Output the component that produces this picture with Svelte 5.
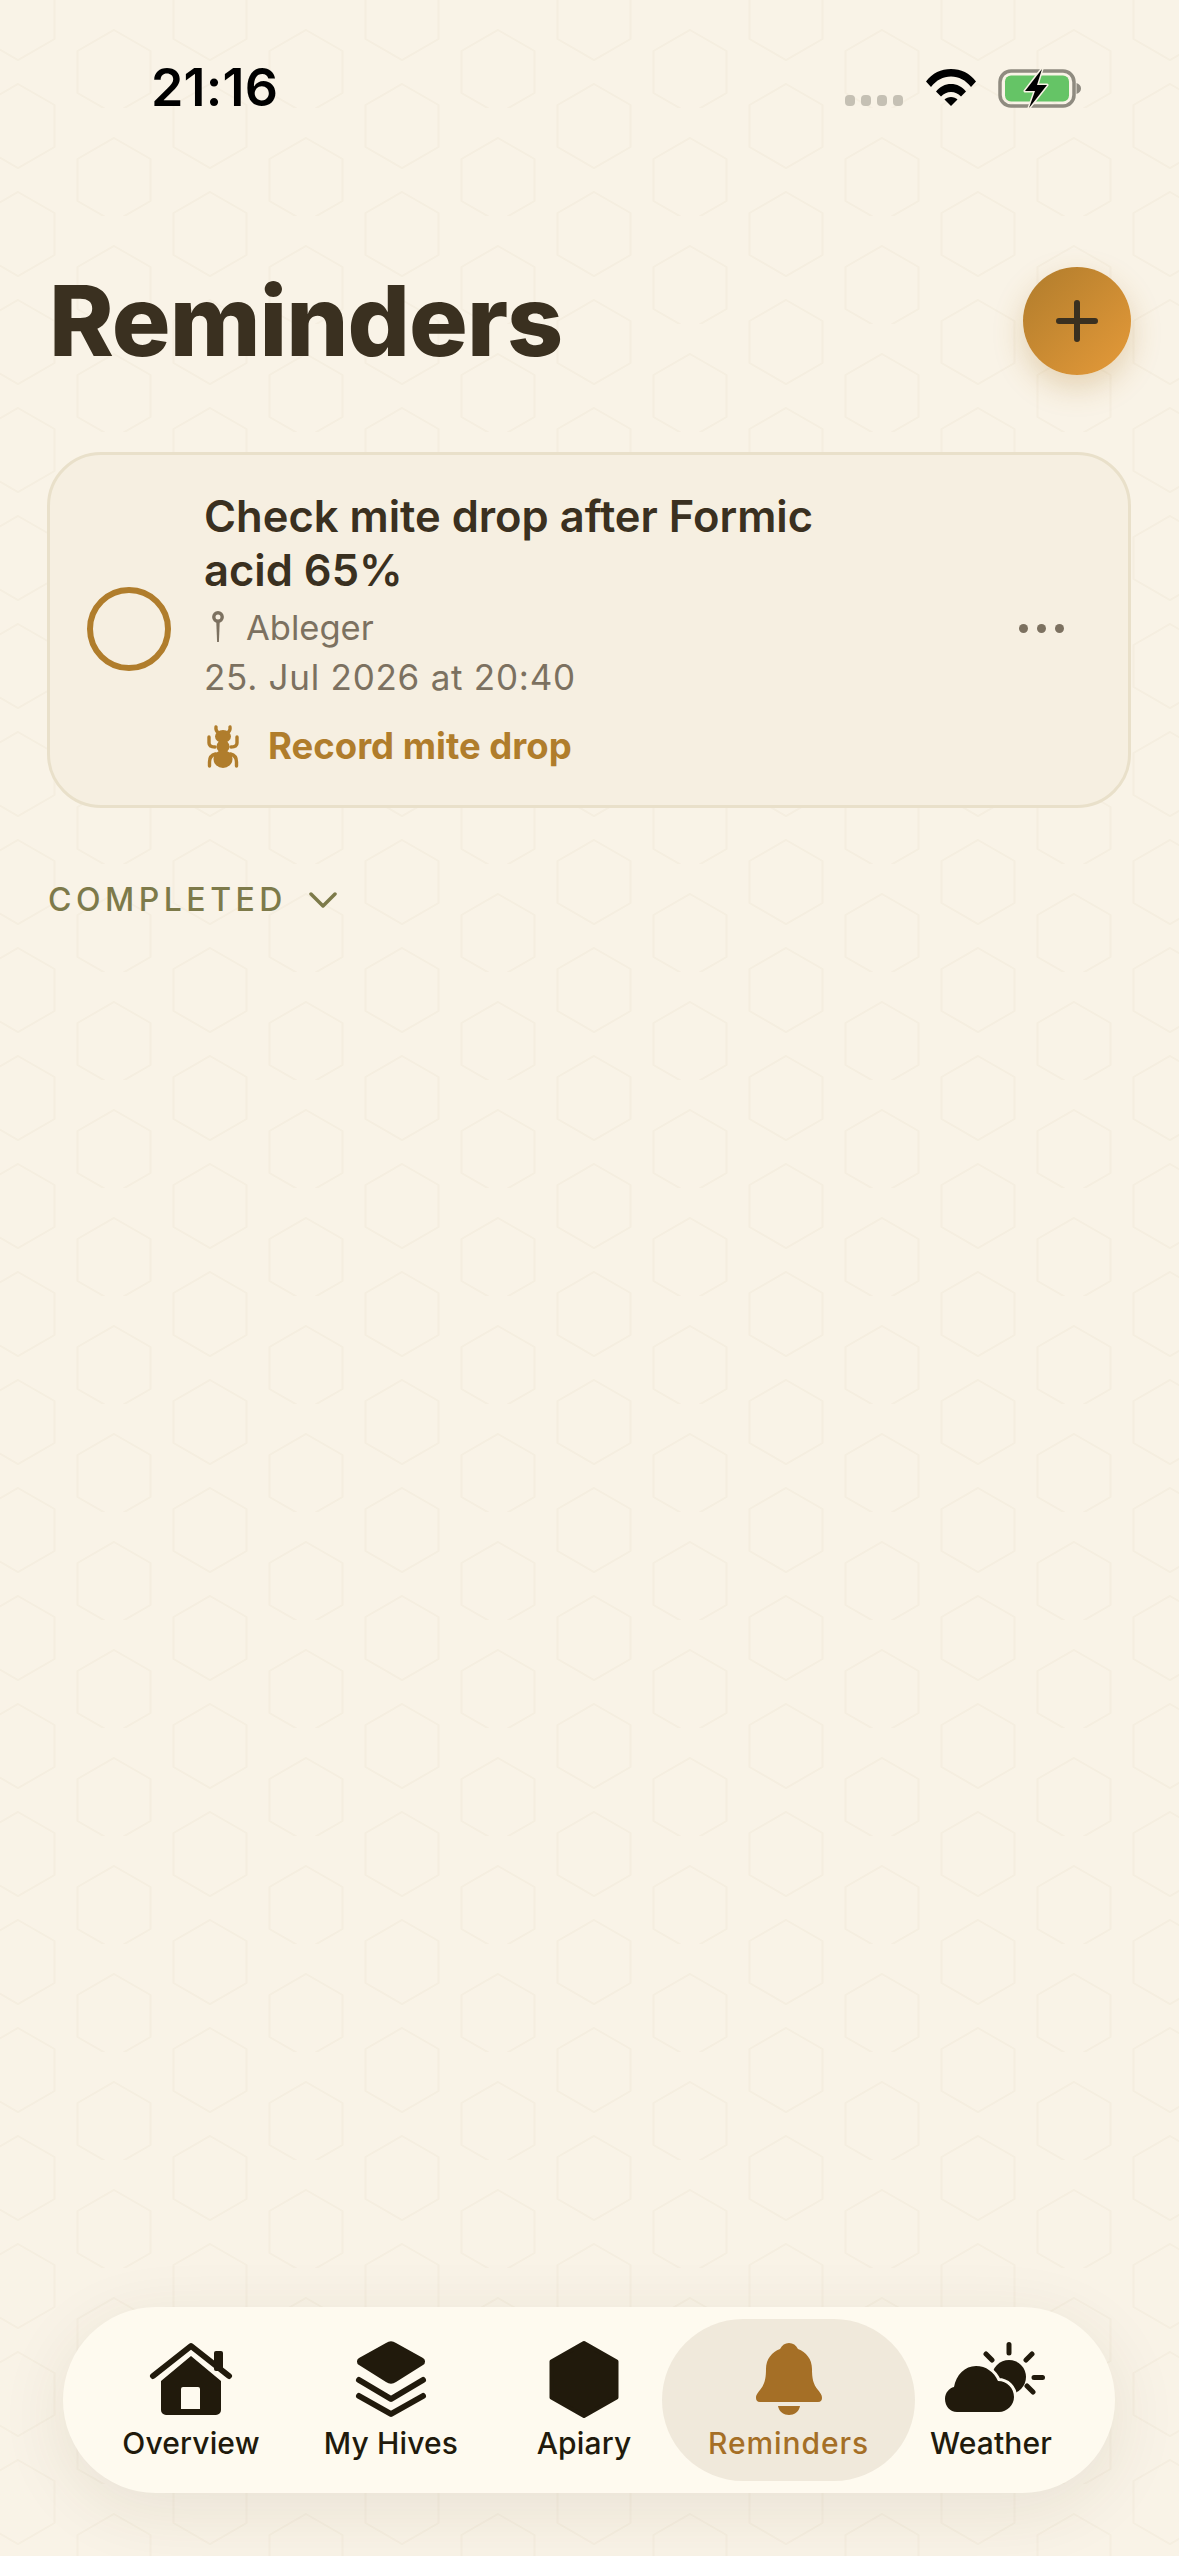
<script lang="ts">
	const hexCenters = [
		[18, 18],
		[210, 18],
		[18, 126],
		[210, 126],
		[114, 72]
	];
	const tabs = [
		{ id: 'home', label: 'Overview' },
		{ id: 'stack', label: 'My Hives' },
		{ id: 'hex', label: 'Apiary' },
		{ id: 'bell', label: 'Reminders', active: true },
		{ id: 'weather', label: 'Weather' }
	];
</script>

<div class="page">
	<svg class="backdrop" width="1179" height="2556" aria-hidden="true">
		<defs>
			<pattern id="honeycomb" width="192" height="108" patternUnits="userSpaceOnUse">
				{#each hexCenters as [x, y]}
					<polygon
						transform="translate({x} {y})"
						points="0,-42 36.5,-21 36.5,21 0,42 -36.5,21 -36.5,-21"
						fill="none"
						stroke="#f5eee0"
						stroke-width="2"
					/>
				{/each}
			</pattern>
		</defs>
		<rect width="1179" height="2556" fill="url(#honeycomb)" />
	</svg>

	<div class="status">
		<span class="time">21:16</span>
		<div class="status-icons">
			<div class="signal">
				<i></i><i></i><i></i><i></i>
			</div>
			<svg class="wifi" width="50" height="38" viewBox="0 0 50 38">
				<path d="M0 13.5C6.5 5 15 1 25 1s18.500 4 25 12.500l-5 5.500C39.500 12 33 8.500 25 8.500S10.500 12 5 19Z" />
				<path d="M10 23.500C14 18.500 19 16 25 16s11 2.500 15 7.500l-5 5C32 25.500 29 24 25 24s-7 1.500-10 4.500Z" />
				<path d="M18.500 31.500C20 30 22.500 29 25 29s5 1 6.500 2.500L25 38Z" />
			</svg>
			<svg class="battery" width="84" height="42" viewBox="0 0 84 42">
				<rect x="2" y="4" width="74" height="35" rx="11" fill="none" stroke="#8f8b80" stroke-width="3.500" />
				<rect x="7" y="8.500" width="64" height="26" rx="6" fill="#65c466" />
				<path d="M78.500 16c3 1 4.500 3 4.500 5.500s-1.500 4.500-4.500 5.500Z" fill="#8f8b80" />
				<path
					d="M44 2 27 24h10l-6 17 18-23H39Z"
					fill="#000"
					stroke="#f7f1e4"
					stroke-width="3"
					stroke-linejoin="round"
					paint-order="stroke"
				/>
			</svg>
		</div>
	</div>

	<header class="head">
		<h1>Reminders</h1>
		<button type="button" class="fab" aria-label="Add reminder">
			<svg width="42" height="42" viewBox="0 0 42 42">
				<path d="M21 3v36M3 21h36" stroke="#3a3020" stroke-width="6" stroke-linecap="round" />
			</svg>
		</button>
	</header>

	<section class="card">
		<span class="check"></span>
		<div class="copy">
			<h2>Check mite drop after Formic acid 65%</h2>
			<p class="place">
				<svg width="14" height="32" viewBox="0 0 14 32">
					<circle cx="7" cy="6" r="4.200" fill="none" stroke="#7c7160" stroke-width="3.400" />
					<path d="M5.200 9h3.600L7.900 31h-1.800Z" fill="#7c7160" />
				</svg>
				<span>Ableger</span>
			</p>
			<p class="date">25. Jul 2026 at 20:40</p>
			<div class="action">
				<svg width="32" height="43" viewBox="0 0 32 43">
					<g fill="#b07d2c">
						<ellipse cx="16" cy="11.500" rx="8" ry="6.500" />
						<ellipse cx="16" cy="21.500" rx="6.500" ry="6.500" />
						<ellipse cx="16" cy="34" rx="9.500" ry="9" />
					</g>
					<g fill="none" stroke="#b07d2c" stroke-width="3.400" stroke-linecap="round">
						<path d="M9 2c-.5 3 1 5 3 6M23 2c.5 3-1 5-3 6" />
						<path d="M2 12v6c0 3 2 4 6 4M30 12v6c0 3-2 4-6 4" />
						<path d="M2.500 41v-4c0-4 2-7 6-8M29.500 41v-4c0-4-2-7-6-8" />
					</g>
				</svg>
				<span>Record mite drop</span>
			</div>
		</div>
		<button type="button" class="more" aria-label="More options">
			<i></i><i></i><i></i>
		</button>
	</section>

	<button type="button" class="completed">
		<span>COMPLETED</span>
		<svg width="28" height="16" viewBox="0 0 28 16">
			<path d="M2 2l12 12L26 2" fill="none" stroke="#7d7a4a" stroke-width="3.500" stroke-linecap="round" stroke-linejoin="round" />
		</svg>
	</button>

	<nav class="tabs">
		{#each tabs as tab}
			<div class="tab" class:active={tab.active}>
				<svg width="110" height="80" viewBox="-5 0 110 80">
					{#if tab.id === 'home'}
						<path d="M12 36 50 6l38 30" fill="none" stroke="#211a0c" stroke-width="6" stroke-linecap="round" stroke-linejoin="round" />
						<rect x="73" y="11" width="9" height="20" rx="2" fill="#211a0c" />
						<path
							fill="#211a0c"
							fill-rule="evenodd"
							d="M50 16 80 41V70a5 5 0 0 1-5 5H25a5 5 0 0 1-5-5V41ZM42 47a2 2 0 0 0-2 2V69H59V49a2 2 0 0 0-2-2Z"
						/>
					{:else if tab.id === 'stack'}
						<path d="M45 3 18 18a4 4 0 0 0 0 7l27 17a9 9 0 0 0 10 0l27-17a4 4 0 0 0 0-7L55 3a9 9 0 0 0-10 0Z" fill="#211a0c" />
						<path d="M18 40 50 59 82 40M18 56 50 74 82 56" fill="none" stroke="#211a0c" stroke-width="6" stroke-linecap="round" stroke-linejoin="round" />
					{:else if tab.id === 'hex'}
						<polygon points="50,3 82.500,21.500 82.500,57.500 50,76 17.500,57.500 17.500,21.500" fill="#211a0c" stroke="#211a0c" stroke-width="4" stroke-linejoin="round" />
					{:else if tab.id === 'bell'}
						<path
							fill="#a56f26"
							d="M50 3C54 3 57 5 59 9C67 12 73 19 73 29C73 38 74 44 79 50C82 54 83 55 83 58C83 60 82 62 79 62H21C18 62 17 60 17 58C17 55 18 54 21 50C26 44 27 38 27 29C27 19 33 12 41 9C43 5 46 3 50 3Z"
						/>
						<path fill="#a56f26" d="M39 66H61C60 72 55 75 50 75C45 75 40 72 39 66Z" />
					{:else}
						<circle cx="68" cy="37" r="17" fill="#211a0c" />
						<path
							fill="#211a0c"
							stroke="#fefaef"
							stroke-width="6"
							paint-order="stroke"
							d="M16 72C9 72 4 66 4 59C4 53 8 48 13 47C15 35 24 26 35 26C45 26 53 32 57 41C66 41 73 48 73 57C73 65 66 72 58 72Z"
						/>
						<path
							stroke="#211a0c"
							stroke-width="5"
							stroke-linecap="round"
							d="M68 4.500V13M45 14l6 6M91 14l-6 6M93 37.500h8.500M86 46l6 6"
						/>
					{/if}
				</svg>
				<span>{tab.label}</span>
			</div>
		{/each}
	</nav>
</div>

<style>
	:global(body) {
		margin: 0;
		background: #f9f3e7;
	}

	.page {
		position: relative;
		display: flex;
		flex-direction: column;
		height: 2556px;
		overflow: hidden;
		background: #f9f3e7;
		font-family: Inter, 'Noto Sans', sans-serif;
		color: #3a3020;
	}

	.backdrop {
		position: absolute;
		inset: 0;
	}

	.status,
	.head,
	.card,
	.completed,
	.tabs {
		position: relative;
	}

	.status {
		display: flex;
		justify-content: space-between;
		align-items: flex-start;
		height: 118px;
		padding: 57px 97px 0 151px;
		box-sizing: border-box;
	}

	.time {
		font-size: 52px;
		line-height: 62px;
		font-weight: 600;
		letter-spacing: 0.2px;
		color: #000;
	}

	.status-icons {
		display: flex;
		align-items: flex-start;
		padding-top: 10px;
	}

	.signal {
		display: flex;
		gap: 6px;
		margin-top: 28px;
		margin-right: 23px;
	}

	.signal i {
		width: 10px;
		height: 11px;
		border-radius: 4px;
		background: #c5c0b4;
	}

	.wifi {
		fill: #000;
		margin-top: 1px;
		margin-right: 22px;
	}

	.head {
		display: flex;
		justify-content: space-between;
		align-items: center;
		margin-top: 149px;
		padding: 0 48px 0 49px;
	}

	h1 {
		margin: 0;
		font-size: 98px;
		line-height: 108px;
		font-weight: 800;
		letter-spacing: -1px;
	}

	.fab {
		display: grid;
		place-items: center;
		width: 108px;
		height: 108px;
		padding: 0;
		border: 0;
		border-radius: 50%;
		background: linear-gradient(135deg, #b07c2c, #e59a39);
		box-shadow: 0 12px 30px rgba(176, 125, 44, 0.28);
	}

	.card {
		display: flex;
		align-items: center;
		margin: 77px 48px 0 47px;
		padding: 34px 0 37px 37px;
		border: 3px solid #e9e0ca;
		border-radius: 54px;
		background: #f6efe1;
	}

	.check {
		flex: none;
		width: 84px;
		height: 84px;
		box-sizing: border-box;
		border: 6px solid #b07d2c;
		border-radius: 50%;
	}

	.copy {
		width: 680px;
		margin-left: 33px;
	}

	h2 {
		margin: 0;
		width: 640px;
		font-size: 43.500px;
		line-height: 54px;
		font-weight: 580;
	}

	.place,
	.date {
		margin: 0;
		color: #7c7160;
	}

	.place {
		display: flex;
		align-items: center;
		gap: 21px;
		height: 48px;
		margin-top: 6px;
		padding-left: 7px;
		font-size: 34.500px;
	}

	.date {
		font-size: 35px;
		line-height: 48px;
		letter-spacing: 0.75px;
		margin-top: 2px;
	}

	.action {
		display: flex;
		align-items: center;
		gap: 29px;
		margin-top: 23px;
		padding-left: 3px;
		font-size: 36.500px;
		line-height: 44px;
		font-weight: 700;
		color: #b07d2c;
	}

	.more {
		display: flex;
		gap: 9px;
		margin-left: 135px;
		padding: 0;
		border: 0;
		background: none;
	}

	.more i {
		width: 9px;
		height: 9px;
		border-radius: 50%;
		background: #7c7160;
	}

	.completed {
		display: flex;
		align-items: center;
		align-self: flex-start;
		gap: 22px;
		margin: 72px 0 0 48px;
		padding: 0;
		border: 0;
		background: none;
		font: inherit;
		font-size: 32px;
		line-height: 40px;
		font-weight: 550;
		letter-spacing: 4.500px;
		color: #7d7a4a;
	}

	.tabs {
		display: grid;
		grid-template-columns: 170px 230px 156px 253px 152px;
		margin: auto 64px 63px 63px;
		padding: 12px 48px 12px 43px;
		border-radius: 93px;
		background: #fefaef;
		box-shadow: 0 16px 70px rgba(70, 50, 20, 0.09);
	}

	.tab {
		display: flex;
		flex-direction: column;
		align-items: center;
		height: 162px;
		padding-top: 21px;
		box-sizing: border-box;
		font-size: 30px;
		font-weight: 450;
		line-height: 40px;
		letter-spacing: 0.15px;
		color: #211a0c;
	}

	.tab svg {
		flex: none;
		margin-bottom: 3px;
	}

	.tab.active {
		border-radius: 81px;
		background: #f0e9db;
		font-weight: 500;
		letter-spacing: 0.9px;
		color: #a56f26;
	}
</style>
